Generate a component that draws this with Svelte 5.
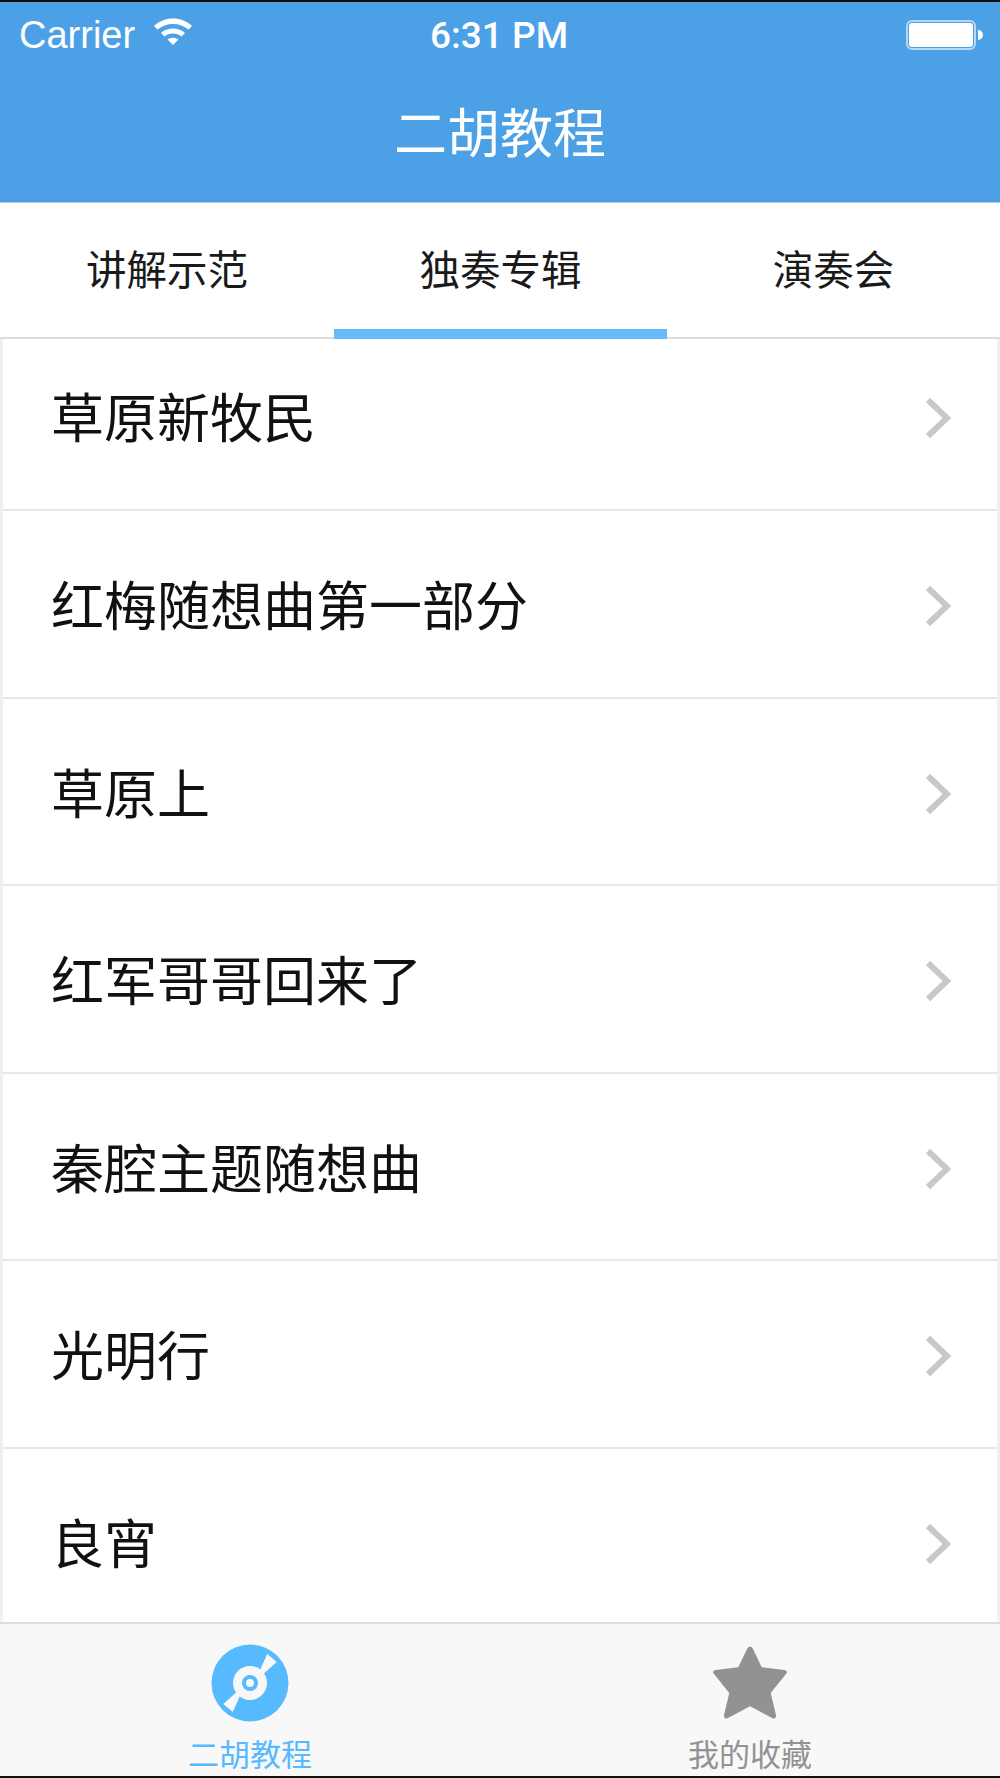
<script>
	const tabs = ['讲解示范', '独奏专辑', '演奏会']
	const rows = ['草原新牧民', '红梅随想曲第一部分', '草原上', '红军哥哥回来了', '秦腔主题随想曲', '光明行', '良宵']
	let active = 1
</script>

<div class="screen">
	<header>
		<div class="status">
			<div class="left">
				<span class="carrier">Carrier</span>
				<svg class="wifi" width="40" height="30" viewBox="0 0 40 30">
					<path d="M1 9 C11 -1 29 -1 39 9 L35.5 12.5 C27 5 13 5 4.5 12.5 Z" fill="#fff" />
					<path d="M8 16 C14 10 26 10 32 16 L28.5 19.5 C24 15.5 16 15.5 11.5 19.5 Z" fill="#fff" />
					<path d="M14.5 22.5 C18 20 22 20 25.5 22.5 L20 28 Z" fill="#fff" />
				</svg>
			</div>
			<span class="time">6:31 PM</span>
			<div class="battery">
				<div class="cell"><div class="fill"></div></div>
				<div class="nub"></div>
			</div>
		</div>
		<h1>二胡教程</h1>
	</header>

	<nav class="tabs">
		{#each tabs as tab, idx}
			<button class:active={idx === active} on:click={() => (active = idx)}>{tab}</button>
		{/each}
	</nav>

	<ul>
		{#each rows as row}
			<li>
				<span>{row}</span>
				<svg width="26" height="42" viewBox="0 0 26 42">
					<path d="M3 3 L22 21 L3 39" fill="none" stroke="#c7c7cc" stroke-width="6" />
				</svg>
			</li>
		{/each}
	</ul>

	<footer>
		<div class="item on">
			<svg width="78" height="78" viewBox="0 0 78 78">
				<circle cx="39" cy="39" r="38.5" fill="#57baff" />
				<path d="M56.3 10 L65.7 18 L52.3 30 L48.7 26.7 Z" fill="#f8f8f8" />
				<path d="M21.7 68 L12.3 60 L25.7 48 L29.3 51.3 Z" fill="#f8f8f8" />
				<circle cx="39" cy="39" r="17" fill="#f8f8f8" />
				<circle cx="39" cy="39" r="8" fill="#57baff" />
				<circle cx="39" cy="39" r="4" fill="#f8f8f8" />
			</svg>
			<span>二胡教程</span>
		</div>
		<div class="item">
			<svg width="78" height="78" viewBox="0 0 78 78">
				<path d="M39 2.5 Q41 2.5 42 5 L50.7 23.3 L73.5 26 Q77.5 27 75 30 L59.7 49 L65 71 Q65 76 61 74 L39 62.3 L17 74 Q13 76 13 71 L18.3 49 L3 30 Q0.5 27 4.5 26 L27.3 23.3 L36 5 Q37 2.5 39 2.5 Z" fill="#929292" />
			</svg>
			<span>我的收藏</span>
		</div>
	</footer>
</div>

<style>
	:global(body) {
		margin: 0;
		background: #fff;
	}

	.screen {
		width: 1000px;
		height: 1778px;
		display: flex;
		flex-direction: column;
		box-sizing: border-box;
		overflow: hidden;
		border-top: 2px solid #111;
		border-bottom: 2px solid #111;
		font-family: 'Noto Sans CJK SC', 'Liberation Sans', sans-serif;
		color: #111;
	}

	header {
		height: 201px;
		flex: none;
		box-sizing: border-box;
		background: #4ca1e6;
		border-bottom: 1px solid #c4c8cc;
		color: #fff;
	}

	.status {
		height: 66px;
		display: grid;
		grid-template-columns: 1fr auto 1fr;
		align-items: center;
		padding: 0 17px 0 19px;
		font-family: 'Liberation Sans', sans-serif;
	}

	.left {
		display: flex;
		align-items: center;
		gap: 18px;
	}

	.carrier {
		font-size: 38px;
	}

	.wifi {
		margin-top: -6px;
	}

	.time {
		margin-left: -4px;
		font-family: Roboto, 'Liberation Sans', sans-serif;
		font-size: 37px;
		font-weight: 500;
	}

	.battery {
		justify-self: end;
		display: flex;
		align-items: center;
		gap: 2px;
	}

	.cell {
		width: 70px;
		height: 30px;
		box-sizing: border-box;
		padding: 1px;
		border: 2px solid #b5d8f5;
		border-radius: 6px;
	}

	.fill {
		height: 100%;
		background: #fff;
		border-radius: 3px;
	}

	.nub {
		width: 5px;
		height: 10px;
		background: #fff;
		border-radius: 0 5px 5px 0;
	}

	h1 {
		margin: 0;
		height: 134px;
		line-height: 124px;
		text-align: center;
		font-size: 53px;
		font-weight: 400;
	}

	.tabs {
		height: 136px;
		flex: none;
		display: grid;
		grid-template-columns: 334px 333px 333px;
		box-sizing: border-box;
		border-bottom: 2px solid #dcdcdc;
	}

	.tabs button {
		position: relative;
		border: none;
		background: transparent;
		padding: 0 0 6px;
		font: inherit;
		font-size: 40.5px;
		color: #1a1a1a;
		cursor: pointer;
	}

	.tabs button.active::after {
		content: '';
		position: absolute;
		left: 0;
		right: 0;
		bottom: -2px;
		height: 10px;
		background: #68bbfb;
	}

	ul {
		flex: 1;
		min-height: 0;
		margin: 0;
		padding: 0;
		list-style: none;
		border-left: 3px solid #f0f0f0;
		border-right: 3px solid #f0f0f0;
		overflow: hidden;
	}

	li {
		height: 187.5px;
		box-sizing: border-box;
		display: flex;
		align-items: center;
		justify-content: space-between;
		padding: 5px 46px 0 48px;
		border-bottom: 2px solid #e8e8e8;
		font-size: 53px;
		color: #111;
	}

	li span {
		margin-bottom: 6px;
	}

	li:first-child {
		height: 172px;
		padding-top: 0;
		padding-bottom: 12px;
	}

	footer {
		height: 154px;
		flex: none;
		box-sizing: border-box;
		display: grid;
		grid-template-columns: 1fr 1fr;
		background: #f8f8f8;
		border-top: 2px solid #dcdcdc;
	}

	.item {
		display: flex;
		flex-direction: column;
		align-items: center;
		padding-top: 20px;
		font-size: 31px;
		color: #929292;
	}

	.item span {
		line-height: 46px;
		margin-top: 8px;
	}

	.item.on {
		color: #57baff;
	}
</style>
